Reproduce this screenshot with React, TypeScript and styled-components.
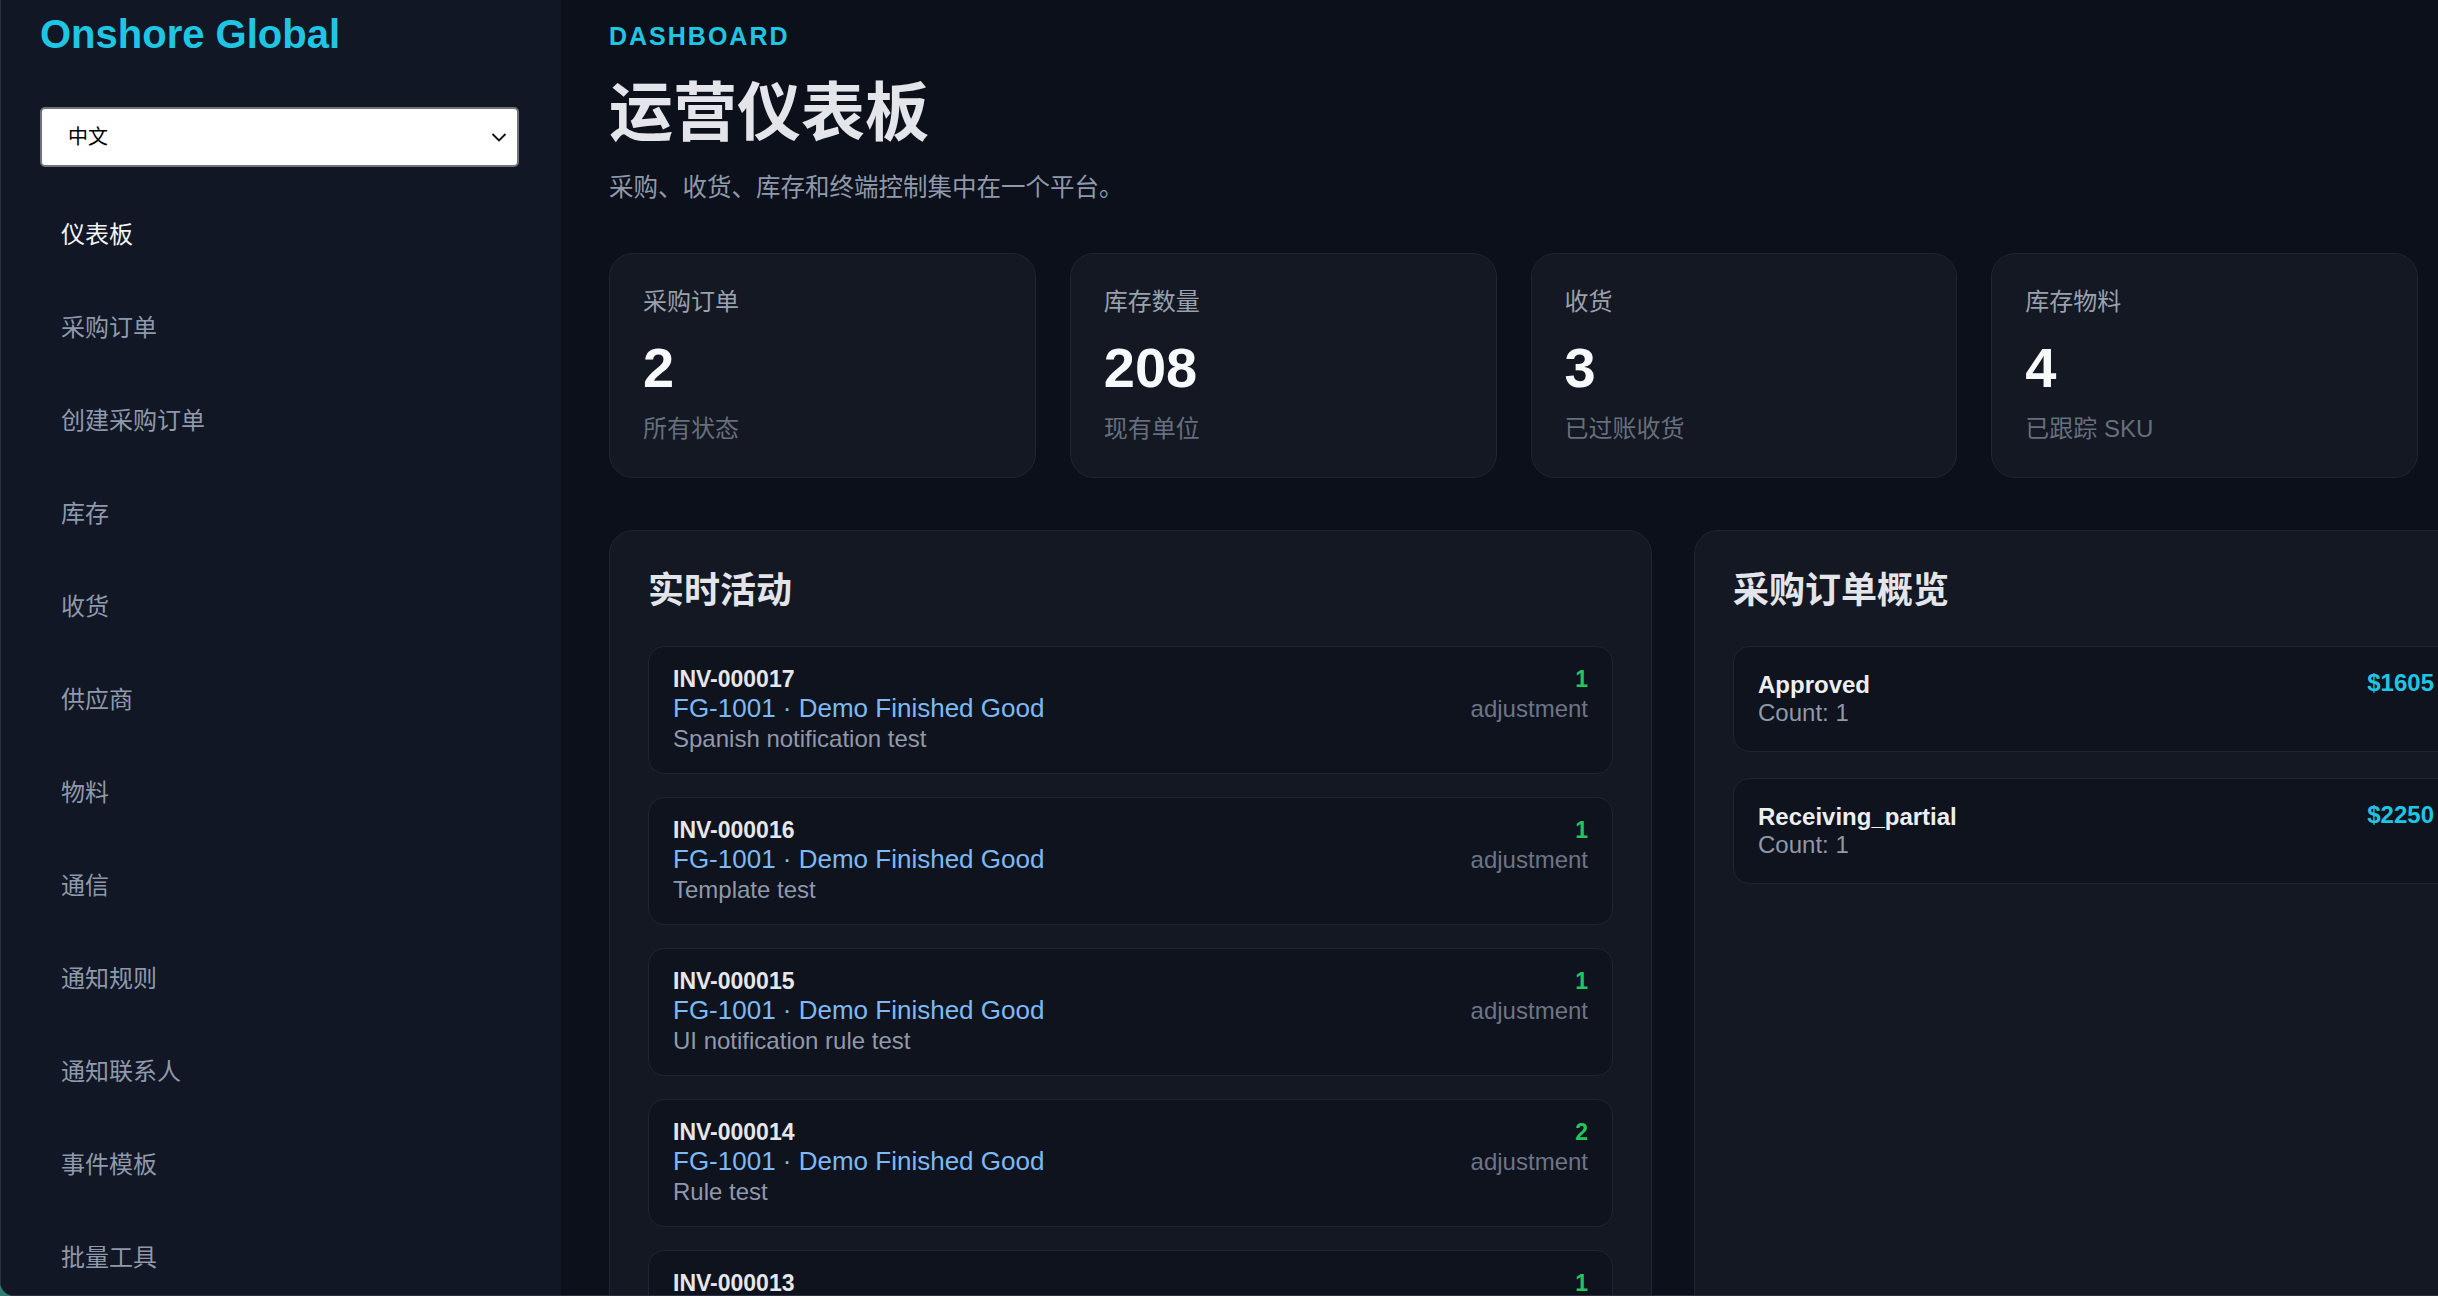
import React from 'react';
import styled, { createGlobalStyle } from 'styled-components';

const GlobalStyle = createGlobalStyle`
  html, body {
    margin: 0;
    padding: 0;
    height: 100%;
    overflow: hidden;
    background: #2f7d70;
  }
  body {
    font-family: "Liberation Sans", "Noto Sans CJK SC", sans-serif;
    -webkit-font-smoothing: antialiased;
  }
  * {
    box-sizing: border-box;
  }
`;

const Shell = styled.div`
  display: flex;
  height: 100vh;
  overflow: hidden;
  background: #0c101a;
  border-left: 1px solid #2a303d;
  border-bottom: 1px solid #2a303d;
  border-bottom-left-radius: 14px;
`;

const Sidebar = styled.aside`
  flex: 0 0 560px;
  background: #111725;
  padding: 10px 40px 0 39px;
  display: flex;
  flex-direction: column;
`;

const Logo = styled.div`
  font-size: 40px;
  line-height: 48px;
  font-weight: 700;
  color: #1fc6e3;
`;

const SelectWrap = styled.div`
  position: relative;
  margin-top: 49px;
  width: 479px;
`;

const LangSelect = styled.select`
  appearance: none;
  width: 100%;
  height: 60px;
  padding: 0 50px 0 26px;
  font-family: "Liberation Sans", "Noto Sans CJK SC", sans-serif;
  font-size: 20px;
  color: #000;
  background: #fff;
  border: 2px solid #6f737b;
  border-radius: 5px;
`;

const Chevron = styled.svg`
  position: absolute;
  right: 12px;
  top: 24px;
  pointer-events: none;
`;

const Nav = styled.nav`
  margin-top: 21px;
  display: flex;
  flex-direction: column;
`;

const NavLink = styled.a<{ $active?: boolean }>`
  display: block;
  padding: 30px 21px;
  font-size: 24px;
  line-height: 33px;
  text-decoration: none;
  color: ${({ $active }) => ($active ? '#f3f4f6' : '#8f99ab')};
`;

const Main = styled.main`
  flex: 1;
  min-width: 0;
  padding: 21px 20px 0 48px;
`;

const Eyebrow = styled.div`
  font-size: 25px;
  line-height: 30px;
  font-weight: 700;
  letter-spacing: 2px;
  color: #1fc6e3;
`;

const Title = styled.h1`
  margin: 24px 0 0;
  font-size: 64px;
  line-height: 76px;
  font-weight: 700;
  color: #e4e5ea;
`;

const Subtitle = styled.p`
  margin: 20px 0 0;
  font-size: 24.5px;
  line-height: 34px;
  color: #8f99ab;
`;

const Stats = styled.section`
  margin-top: 48px;
  display: grid;
  grid-template-columns: repeat(4, 1fr);
  gap: 34px;
`;

const StatCard = styled.div`
  background: #131823;
  border: 1px solid #1f2532;
  border-radius: 24px;
  padding: 32px 33px;
`;

const StatLabel = styled.div<{ $muted?: boolean }>`
  font-size: 24px;
  line-height: 32px;
  color: ${({ $muted }) => ($muted ? '#676f7c' : '#9aa1ad')};
`;

const StatValue = styled.div`
  margin: 16px 0 12px;
  font-size: 56px;
  line-height: 67px;
  font-weight: 700;
  color: #f8f9fb;
`;

const Panels = styled.section`
  margin-top: 52px;
  display: grid;
  grid-template-columns: 1043px 804px;
  gap: 42px;
`;

const Panel = styled.div`
  background: #131823;
  border: 1px solid #1f2532;
  border-radius: 24px;
  padding: 37px 38px 40px;
`;

const PanelTitle = styled.h2`
  margin: 0 0 32px;
  font-size: 36px;
  line-height: 46px;
  font-weight: 700;
  color: #e4e5ea;
`;

const List = styled.div<{ $gap: number }>`
  display: flex;
  flex-direction: column;
  gap: ${({ $gap }) => $gap}px;
`;

const Item = styled.div`
  display: flex;
  justify-content: space-between;
  align-items: flex-start;
  background: #0f131d;
  border: 1px solid #1f2532;
  border-radius: 16px;
`;

const ActivityItem = styled(Item)`
  padding: 19px 24px;
`;

const OrderItem = styled(Item)`
  padding: 24px 24px;
`;

const Stack = styled.div<{ $right?: boolean }>`
  display: flex;
  flex-direction: column;
  align-items: ${({ $right }) => ($right ? 'flex-end' : 'flex-start')};
`;

const RefCode = styled.div`
  font-size: 23px;
  line-height: 27px;
  font-weight: 700;
  color: #e6e7eb;
`;

const ItemLink = styled.div`
  font-size: 26px;
  line-height: 31px;
  color: #7db9f7;
`;

const Note = styled.div`
  font-size: 24px;
  line-height: 30px;
  color: #8f99ab;
`;

const Qty = styled.div`
  font-size: 23px;
  line-height: 27px;
  font-weight: 700;
  color: #22c55e;
`;

const Kind = styled.div`
  font-size: 24px;
  line-height: 31px;
  color: #6c7587;
`;

const Status = styled.div`
  font-size: 24px;
  line-height: 28px;
  font-weight: 700;
  color: #eceef1;
`;

const Count = styled.div`
  font-size: 24px;
  line-height: 28px;
  color: #8f99ab;
`;

const Amount = styled.div`
  font-size: 24px;
  line-height: 28px;
  font-weight: 700;
  color: #1fc6e3;
  margin-top: -2px;
`;

const navItems = [
  '仪表板',
  '采购订单',
  '创建采购订单',
  '库存',
  '收货',
  '供应商',
  '物料',
  '通信',
  '通知规则',
  '通知联系人',
  '事件模板',
  '批量工具',
];

const stats = [
  { label: '采购订单', value: '2', hint: '所有状态' },
  { label: '库存数量', value: '208', hint: '现有单位' },
  { label: '收货', value: '3', hint: '已过账收货' },
  { label: '库存物料', value: '4', hint: '已跟踪 SKU' },
];

const activity = [
  { ref: 'INV-000017', note: 'Spanish notification test', qty: 1 },
  { ref: 'INV-000016', note: 'Template test', qty: 1 },
  { ref: 'INV-000015', note: 'UI notification rule test', qty: 1 },
  { ref: 'INV-000014', note: 'Rule test', qty: 2 },
  { ref: 'INV-000013', note: 'Notification test', qty: 1 },
  { ref: 'INV-000012', note: 'Initial stock', qty: 5 },
];

const orders = [
  { status: 'Approved', count: 1, amount: '$1605' },
  { status: 'Receiving_partial', count: 1, amount: '$2250' },
];

const App: React.FC = () => {
  return (
    <>
      <GlobalStyle />
      <Shell>
        <Sidebar>
          <Logo>Onshore Global</Logo>
          <SelectWrap>
            <LangSelect defaultValue="zh" aria-label="Language">
              <option value="zh">中文</option>
              <option value="en">English</option>
              <option value="es">Español</option>
            </LangSelect>
            <Chevron width="16" height="12" viewBox="0 0 16 12">
              <polyline points="1.5,3 8,9.5 14.5,3" fill="none" stroke="#111" strokeWidth="1.8" />
            </Chevron>
          </SelectWrap>
          <Nav>
            {navItems.map((item, i) => (
              <NavLink key={item} href="#" $active={i === 0}>
                {item}
              </NavLink>
            ))}
          </Nav>
        </Sidebar>

        <Main>
          <Eyebrow>DASHBOARD</Eyebrow>
          <Title>运营仪表板</Title>
          <Subtitle>采购、收货、库存和终端控制集中在一个平台。</Subtitle>

          <Stats>
            {stats.map((s) => (
              <StatCard key={s.label}>
                <StatLabel>{s.label}</StatLabel>
                <StatValue>{s.value}</StatValue>
                <StatLabel $muted>{s.hint}</StatLabel>
              </StatCard>
            ))}
          </Stats>

          <Panels>
            <Panel>
              <PanelTitle>实时活动</PanelTitle>
              <List $gap={23}>
                {activity.map((a) => (
                  <ActivityItem key={a.ref}>
                    <Stack>
                      <RefCode>{a.ref}</RefCode>
                      <ItemLink>FG-1001 · Demo Finished Good</ItemLink>
                      <Note>{a.note}</Note>
                    </Stack>
                    <Stack $right>
                      <Qty>{a.qty}</Qty>
                      <Kind>adjustment</Kind>
                    </Stack>
                  </ActivityItem>
                ))}
              </List>
            </Panel>

            <Panel>
              <PanelTitle>采购订单概览</PanelTitle>
              <List $gap={26}>
                {orders.map((o) => (
                  <OrderItem key={o.status}>
                    <Stack>
                      <Status>{o.status}</Status>
                      <Count>Count: {o.count}</Count>
                    </Stack>
                    <Amount>{o.amount}</Amount>
                  </OrderItem>
                ))}
              </List>
            </Panel>
          </Panels>
        </Main>
      </Shell>
    </>
  );
};

export default App;
